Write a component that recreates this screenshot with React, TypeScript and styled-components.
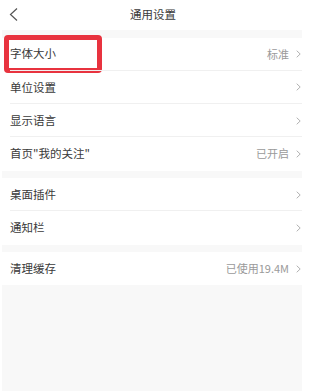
import React from "react";
import styled, { createGlobalStyle } from "styled-components";

const Global = createGlobalStyle`
  html, body { margin: 0; padding: 0; background: #ffffff; }
  body { font-family: "Noto Sans CJK SC", "Noto Sans", sans-serif; }
`;

const Page = styled.div`
  margin-left: 2px;
  width: 300px;
  height: 391px;
  background: #f8f8f8;
  display: flex;
  flex-direction: column;
  overflow: hidden;
`;

const Header = styled.div`
  height: 30px;
  background: #ffffff;
  display: grid;
  grid-template-columns: 40px 1fr 40px;
  align-items: center;
`;

const BackButton = styled.div`
  display: flex;
  align-items: center;
  padding-left: 7px;
  height: 30px;
`;

const Title = styled.div`
  text-align: center;
  font-size: 11.5px;
  color: #3a3a3a;
  line-height: 1;
  margin-left: 2px;
`;

const Group = styled.div`
  margin-top: 7.5px;
  background: #ffffff;
  display: flex;
  flex-direction: column;
`;

const Row = styled.div<{ $divider?: boolean }>`
  position: relative;
  height: 33.25px;
  box-sizing: border-box;
  padding-left: 8px;
  display: flex;
  align-items: center;
  &::after {
    content: "";
    display: ${(p) => (p.$divider ? "block" : "none")};
    position: absolute;
    left: 8px;
    right: 0;
    bottom: 0;
    height: 1px;
    background: #f0f0f0;
  }
`;

const Label = styled.span`
  flex: 1;
  font-size: 11.5px;
  color: #3a3a3a;
  line-height: 1;
`;

const Value = styled.span`
  font-size: 11px;
  color: #9a9a9a;
  line-height: 1;
  margin-right: 7px;
`;

const Chevron = styled.svg`
  width: 5px;
  height: 8px;
  margin-right: 1px;
  flex-shrink: 0;
`;

const Highlight = styled.div`
  position: absolute;
  left: 2px;
  top: -3px;
  width: 98px;
  height: 38px;
  box-sizing: border-box;
  border: 5px solid #e8333f;
  border-radius: 4px;
  pointer-events: none;
`;

type Item = { label: string; value?: string; highlight?: boolean };

const groups: Item[][] = [
  [
    { label: "字体大小", value: "标准", highlight: true },
    { label: "单位设置" },
    { label: "显示语言" },
    { label: "首页\"我的关注\"", value: "已开启" },
  ],
  [{ label: "桌面插件" }, { label: "通知栏" }],
  [{ label: "清理缓存", value: "已使用19.4M" }],
];

const ChevronIcon = () => (
  <Chevron viewBox="0 0 5 8">
    <polyline points="0.7,0.7 4.2,4 0.7,7.3" fill="none" stroke="#a8a8a8" strokeWidth="0.9" />
  </Chevron>
);

export default function App() {
  return (
    <>
      <Global />
      <Page>
        <Header>
          <BackButton>
            <svg width="10" height="16" viewBox="0 0 10 16">
              <polyline points="8,1.5 1.5,7.5 8,13.5" fill="none" stroke="#555555" strokeWidth="1.2" />
            </svg>
          </BackButton>
          <Title>通用设置</Title>
          <div />
        </Header>
        {groups.map((g, gi) => (
          <Group key={gi}>
            {g.map((item, i) => (
              <Row key={item.label} $divider={i < g.length - 1}>
                <Label>{item.label}</Label>
                {item.value && <Value>{item.value}</Value>}
                <ChevronIcon />
                {item.highlight && <Highlight />}
              </Row>
            ))}
          </Group>
        ))}
      </Page>
    </>
  );
}
